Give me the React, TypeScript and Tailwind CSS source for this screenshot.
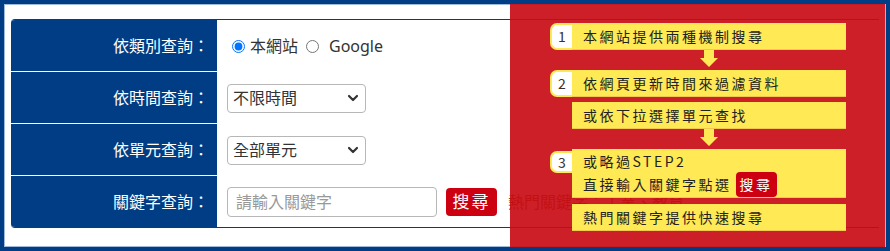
import type { ReactNode } from "react";

// 搜尋面板 + 右側紅色說明層(步驟 1~3)
const font = { fontFamily: '"Noto Sans", "Noto Sans CJK TC", sans-serif' };

const ROWS = ["依類別查詢：", "依時間查詢：", "依單元查詢：", "關鍵字查詢："];

function Chevron() {
  return (
    <svg width="12" height="12" viewBox="0 0 12 12" className="pointer-events-none absolute right-[6px] top-1/2 -translate-y-1/2">
      <path d="M2 4l4 4 4-4" fill="none" stroke="#333" strokeWidth="2.2" strokeLinecap="round" strokeLinejoin="round" />
    </svg>
  );
}

function FakeSelect({ value }: { value: string }) {
  return (
    <div className="relative h-[29px] w-[139px] rounded-[4px] border border-[#b7b7b7] bg-white">
      <span className="absolute left-[5px] top-1/2 -translate-y-1/2 text-[16px] text-[#333]">{value}</span>
      <Chevron />
    </div>
  );
}

function Arrow() {
  return (
    <div className="flex h-[20px] pl-[22px]">
      <div className="flex flex-1 justify-center">
        <svg width="18" height="17" viewBox="0 0 18 17">
          <path d="M4 0h10v8h4l-9 9-9-9h4z" fill="#ffe955" />
        </svg>
      </div>
    </div>
  );
}

function Badge({ n, h }: { n: number; h: string }) {
  return (
    <div className={`flex w-[22px] shrink-0 items-center justify-center rounded-l-[7px] border-2 border-r-0 border-[#ffe955] bg-white text-[14px] text-[#333] ${h}`}>
      {n}
    </div>
  );
}

function Step({ n, children, tall }: { n?: number; children: ReactNode; tall?: boolean }) {
  return (
    <div className="flex items-start">
      {n ? <Badge n={n} h={tall ? "mt-[2px] h-[22px]" : "mt-[0px] h-[27px]"} /> : <div className="w-[22px] shrink-0" />}
      <div
        className={`flex flex-1 border-b border-[#f2c94c] bg-[#ffe955] pl-[11px] text-[14px] tracking-[2.5px] text-[#222] ${
          tall ? "h-[49px] flex-col justify-center leading-[22px]" : "h-[27px] items-center"
        }`}
      >
        {children}
      </div>
    </div>
  );
}

export default function App() {
  return (
    <div className="relative h-[251px] w-[890px] bg-[#003d85] p-[4px]" style={font}>
      <div className="h-full w-full border border-[#9fb9da] bg-white pb-[18px] pl-[6px] pr-[6px] pt-[14px]">
        <div className="flex flex-col overflow-hidden rounded-l-[4px] border-y border-[#003d85]">
          {ROWS.map((label, i) => (
            <div key={label} className="flex h-[52px] last:h-[51px]">
              <div
                className={`flex w-[206px] shrink-0 items-center justify-end bg-[#003d85] pr-[8px] text-[16px] text-white ${
                  i < 3 ? "border-b border-white" : ""
                }`}
              >
                {label}
              </div>
              <div className="flex flex-1 items-center pl-[10px] text-[16px] text-[#333]">
                {i === 0 && (
                  <div className="flex items-center">
                    <input type="radio" name="src" defaultChecked className="ml-[5px] h-[13px] w-[13px]" />
                    <span className="ml-[5px]">本網站</span>
                    <input type="radio" name="src" className="ml-[8px] h-[13px] w-[13px]" />
                    <span className="ml-[10px]">Google</span>
                  </div>
                )}
                {i === 1 && <FakeSelect value="不限時間" />}
                {i === 2 && <FakeSelect value="全部單元" />}
                {i === 3 && (
                  <div className="flex items-center">
                    <input
                      placeholder="請輸入關鍵字"
                      className="h-[30px] w-[210px] rounded-[4px] border border-[#b7b7b7] pl-[8px] text-[16px] outline-none placeholder:text-[#999]"
                    />
                    <button className="ml-[9px] h-[28px] w-[51px] rounded-[4px] bg-[#cc0011] text-[17px] tracking-[2px] text-white">
                      搜尋
                    </button>
                    <span className="ml-[11px] whitespace-nowrap text-[#8b4513]">熱門關鍵字：工業、教育</span>
                  </div>
                )}
              </div>
            </div>
          ))}
        </div>
      </div>

      {/* 說明層 */}
      <div className="absolute left-[510px] top-[4px] h-[243px] w-[375px] bg-[rgba(200,12,21,0.92)] pl-[40px] pt-[19px]" style={{ fontFamily: '"Noto Sans CJK TC", sans-serif' }}>
        <div className="flex w-[296px] flex-col">
          <Step n={1}>本網站提供兩種機制搜尋</Step>
          <Arrow />
          <Step n={2}>依網頁更新時間來過濾資料</Step>
          <div className="h-[5px]" />
          <Step>或依下拉選擇單元查找</Step>
          <Arrow />
          <Step n={3} tall>
            <span>或略過STEP2</span>
            <span className="flex items-center">
              直接輸入關鍵字點選
              <span className="ml-[4px] flex h-[25px] items-center rounded-[4px] bg-[#cc0011] px-[4px] text-white">搜尋</span>
            </span>
          </Step>
          <div className="h-[6px]" />
          <Step>熱門關鍵字提供快速搜尋</Step>
        </div>
      </div>
    </div>
  );
}
